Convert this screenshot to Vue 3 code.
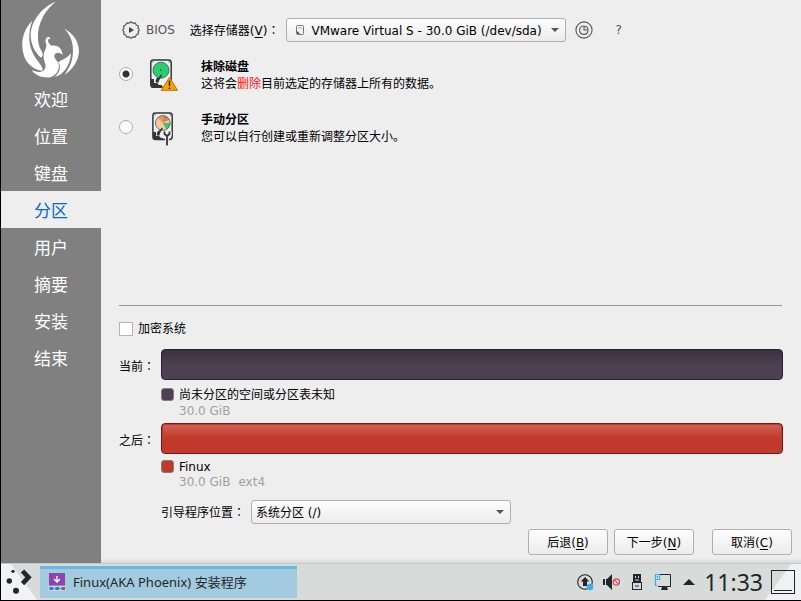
<script setup>
import { ref } from 'vue'

const steps = ['欢迎', '位置', '键盘', '分区', '用户', '摘要', '安装', '结束']
const current = 3
const mode = ref('erase')
const encrypt = ref(false)
const device = ref('sda')
const loader = ref('root')
</script>

<template>
  <div class="desktop">
    <div class="installer">
      <aside class="sidebar">
        <svg class="logo" viewBox="60 0 186 240" aria-hidden="true">
          <g fill="#fff">
            <path d="M97 62C77 80 65 110 67 140C69 174 84 195 106 206C118 211 130 215 128 206C124 190 92 168 88 122C87 98 90 78 97 62Z" />
            <path d="M167 5C130 20 94 58 92 104C92 136 108 160 123 173C129 169 129 163 127 156C105 126 106 54 167 5Z" />
            <path d="M139 133C133 121 138 110 147 111C153 113 150 121 147 117C141 118 145 131 154 137C170 134 186 141 188 166C184 159 175 156 168 160C159 165 164 176 171 183C184 198 174 225 151 232C129 235 105 227 96 211C110 216 126 220 134 208C142 194 129 184 131 166C133 150 140 146 139 133Z" />
            <path d="M213 160C203 174 186 179 175 187C186 203 176 222 164 231C188 227 211 197 213 160Z" />
            <path d="M192 86C215 97 236 119 237 153C236 184 216 210 194 224C212 199 219 179 219 151C219 126 211 102 192 86Z" />
          </g>
        </svg>
        <ol class="steps">
          <li v-for="(s, i) in steps" :key="s" :class="{ active: i === current }">{{ s }}</li>
        </ol>
      </aside>

      <main class="content">
        <div class="device-row">
          <svg class="icon18" viewBox="0 0 18 18" aria-hidden="true">
            <path d="M9 .8L11 2.2L13.3 1.9L14.3 4L16.4 5L16.1 7.2L17.3 9L16.1 10.9L16.4 13L14.3 14L13.3 16.1L11 15.9L9 17.2L7 15.9L4.7 16.1L3.7 14L1.6 13L1.9 10.9L.7 9L1.9 7.2L1.6 5L3.7 4L4.7 1.9L7 2.2Z" fill="none" stroke="#555" stroke-width="1.2" stroke-linejoin="round" />
            <path d="M7 6L12 9L7 12Z" fill="#444" />
          </svg>
          <span class="bios">BIOS</span>
          <label class="device-label" for="device">选择存储器(<u>V</u>)<span class="colon">：</span></label>
          <div class="combo device">
            <select id="device" v-model="device">
              <option value="sda">VMware Virtual S - 30.0 GiB (/dev/sda)</option>
            </select>
            <svg class="drive" viewBox="0 0 8 10" aria-hidden="true">
              <rect x=".5" y=".5" width="7" height="9" rx="1" fill="#f3f3f3" stroke="#777" />
              <path d="M2 3.5A2.3 2.3 0 0 1 6 4" fill="none" stroke="#aaa" />
              <path d="M1 9V6.5H2L4 9Z" fill="#555" />
            </svg>
            <span class="arrow"></span>
          </div>
          <button class="plain revert" type="button" aria-label="partition table">
            <svg class="icon18" viewBox="0 0 18 18" aria-hidden="true">
              <g fill="none" stroke="#555" stroke-width="1.1">
                <circle cx="9" cy="9" r="8.1" />
                <path d="M8.5 5A4.2 4.2 0 1 0 13 9.6" />
                <path d="M9 5.2V9H13C13 6.3 11.6 5.2 9 5.2Z" />
              </g>
            </svg>
          </button>
          <button class="plain help" type="button">?</button>
        </div>

        <div class="choices">
          <label class="choice">
            <input v-model="mode" type="radio" name="mode" value="erase" />
            <svg class="disk" viewBox="0 0 34 34" aria-hidden="true">
              <rect x="3.8" y="1" width="20.4" height="27.2" rx="2.6" fill="#eef1f3" stroke="#31363b" stroke-width="1.5" />
              <path d="M4 20H7V24H10L12 26H15V29H5L4 28Z" fill="#31363b" />
              <circle cx="14" cy="11.2" r="8" fill="#2ecc71" stroke="#3a5548" stroke-width=".8" />
              <circle cx="14" cy="11" r=".8" fill="#31363b" />
              <path d="M14.5 15L12 18L9.3 19.5L8.4 23L11 24L13.5 18.8L15 17Z" fill="#31363b" />
              <path d="M5.7 3h1M21.5 3h1" stroke="#31363b" />
              <path d="M22.5 18.2L30.6 31.3H14.1Z" fill="#f5a30a" stroke="#b97608" stroke-width="1" stroke-linejoin="round" />
              <path d="M22.5 21.5V27M22.5 28.5V30" stroke="#2c1c00" stroke-width="1.5" />
            </svg>
            <span class="choice-text"><b>抹除磁盘</b><span>这将会<em>删除</em>目前选定的存储器上所有的数据。</span></span>
          </label>
          <label class="choice">
            <input v-model="mode" type="radio" name="mode" value="manual" />
            <svg class="disk" viewBox="0 0 34 34" aria-hidden="true">
              <rect x="5.9" y="1" width="19.3" height="26.4" rx="2.6" fill="#eef1f3" stroke="#31363b" stroke-width="1.5" />
              <path d="M6 20H9V24H12L14 26H16V28H7L6 27Z" fill="#31363b" />
              <circle cx="15.8" cy="11" r="7.4" fill="#fac7a0" />
              <path d="M15.8 11V3.6A7.4 7.4 0 0 1 22.4 7.8Z" fill="#d38750" />
              <path d="M15.8 11L10.5 5.8A7.4 7.4 0 0 1 15.8 3.6Z" fill="#e39a67" />
              <path d="M15.8 11H23.2A7.4 7.4 0 0 1 19.5 17.4Z" fill="#2ecc71" />
              <circle cx="15.8" cy="11" r="7.4" fill="none" stroke="#5c5651" stroke-width=".8" />
              <path d="M15 15.5L12.8 18L10.5 19.5L9.6 23L12 24L14.2 18.8L16 17Z" fill="#31363b" />
              <path d="M7.8 3h1M22.6 3h1" stroke="#31363b" />
              <path d="M17.2 19.5V22L20 24.5L22.8 22V19.5M20 24V33" fill="none" stroke="#eee" stroke-width="4" />
              <path d="M17.5 19.5V22L20 24L22.5 22V19.5M20 23.5V33.5" fill="none" stroke="#31363b" stroke-width="1.8" />
            </svg>
            <span class="choice-text"><b>手动分区</b><span>您可以自行创建或重新调整分区大小。</span></span>
          </label>
        </div>

        <section class="summary">
          <label class="encrypt"><input v-model="encrypt" type="checkbox" />加密系统</label>

          <div class="parts">
            <span class="part-label">当前<span class="colon">：</span></span>
            <div class="bar before"></div>
            <div class="legend first">
              <span class="swatch dark"></span>
              <span class="legend-name">尚未分区的空间或分区表未知</span>
              <span class="legend-info">30.0 GiB</span>
            </div>
            <span class="part-label">之后<span class="colon">：</span></span>
            <div class="bar after"></div>
            <div class="legend">
              <span class="swatch red"></span>
              <span class="legend-name">Finux</span>
              <span class="legend-info"><span>30.0 GiB</span><span>ext4</span></span>
            </div>
            <div class="loader-row">
              <label for="loader">引导程序位置<span class="colon">：</span></label>
              <div class="combo loader">
                <select id="loader" v-model="loader">
                  <option value="root">系统分区 (/)</option>
                </select>
                <span class="arrow"></span>
              </div>
            </div>
          </div>
        </section>

        <div class="actions">
          <button class="push" type="button">后退(<u>B</u>)</button>
          <button class="push" type="button">下一步(<u>N</u>)</button>
          <button class="push cancel" type="button">取消(<u>C</u>)</button>
        </div>
      </main>
    </div>

    <footer class="taskbar">
      <button class="launcher" type="button" aria-label="menu">
        <svg viewBox="0 0 39 36" aria-hidden="true">
          <path d="M0 0H10L36 36H0Z" fill="#f2f3f5" />
          <g fill="#232629">
            <circle cx="12" cy="7.3" r="1.6" />
            <circle cx="8.3" cy="17" r="2.7" />
            <circle cx="15" cy="26.8" r="3" />
          </g>
          <path d="M21.5 7L27.5 13.3L21.5 19.6" fill="none" stroke="#232629" stroke-width="4.6" />
        </svg>
      </button>
      <button class="task" type="button">
        <svg class="task-icon" viewBox="0 0 18 18" aria-hidden="true">
          <rect x="1" y="0" width="16" height="12.5" fill="#8e44ad" />
          <path d="M9 3V8.5M6 6L9 9L12 6" fill="none" stroke="#fff" stroke-width="1.3" />
          <rect x="0" y="13" width="18" height="5" fill="#c5d3dc" />
          <path d="M1.5 15.5H16.5" stroke="#7f8c8d" />
          <path d="M1.5 15.5H5M7.5 15.5H11" stroke="#2585d0" stroke-width="3" />
          <path d="M13.5 15.5H17" stroke="#6e6e6e" stroke-width="3" />
        </svg>
        Finux(AKA Phoenix) 安装程序
      </button>
      <div class="tray">
        <svg class="tray-icon" viewBox="0 0 18 18" aria-hidden="true">
          <circle cx="9" cy="9" r="7.3" fill="none" stroke="#232629" stroke-width="1.1" />
          <path d="M9 4L13.3 8.5H11V13H7V8.5H4.7Z" fill="#232629" />
          <circle cx="14" cy="14" r="3.2" fill="#3daee9" />
        </svg>
        <svg class="tray-icon" viewBox="0 0 18 18" aria-hidden="true">
          <path d="M1 6H3V12H1ZM4 6H5L10 1V17L5 12H4Z" fill="#232629" />
          <circle cx="14.4" cy="9" r="3.2" fill="none" stroke="#da4453" stroke-width="1.2" />
          <path d="M12.2 6.8L16.6 11.2" stroke="#da4453" stroke-width="1.2" />
        </svg>
        <svg class="tray-icon" viewBox="0 0 18 18" aria-hidden="true">
          <path d="M5 1H13V9H5Z" fill="#232629" />
          <path d="M7 3H8V5H7ZM10 3H11V5H10Z" fill="#d7dbdb" />
          <path d="M7 7H11" stroke="#d7dbdb" />
          <rect x="4.5" y="9.5" width="9" height="7" fill="#d7dbdb" stroke="#232629" />
          <path d="M7 13H11" stroke="#232629" />
        </svg>
        <svg class="tray-icon" viewBox="0 0 18 18" aria-hidden="true">
          <path d="M6 1.5H16.5V13.5H4" fill="none" stroke="#232629" />
          <path d="M4 13H17V14H13L14 17H7L8 14H4Z" fill="#232629" />
          <path d="M1.5 1.5H5.5V6.5H1.5ZM3.5 3V5M1.5 6.5V12.5H3" fill="none" stroke="#3daee9" stroke-width="1.2" />
        </svg>
        <svg class="tray-icon" viewBox="0 0 18 18" aria-hidden="true"><path d="M3 12L9 6L15 12Z" fill="#232629" /></svg>
      </div>
      <time class="clock">11:33</time>
      <button class="show-desktop" type="button" aria-label="desktop">
        <svg viewBox="0 0 36 36" aria-hidden="true">
          <path d="M0 36L26 0H36V36Z" fill="#f0f1f4" />
          <rect x="6.5" y="6.5" width="23" height="23" fill="none" stroke="#232629" />
          <path d="M9 26.5H27" stroke="#232629" />
        </svg>
      </button>
    </footer>
  </div>
</template>

<style>
body {
  margin: 0;
}
</style>

<style scoped>
.desktop {
  box-sizing: border-box;
  display: flex;
  flex-direction: column;
  min-height: 100vh;
  border-left: 1px solid #000;
  border-bottom: 1px solid #000;
  background: #eeeeee;
  color: #000;
  font: 12px/16px "DejaVu Sans", "Noto Sans CJK SC", sans-serif;
}
button,
select {
  font: inherit;
  color: inherit;
  margin: 0;
}
u {
  text-underline-offset: 2px;
  text-decoration-thickness: 1px;
}
.colon {
  font-family: "Noto Sans CJK TC", sans-serif;
}
.installer {
  flex: 1;
  display: flex;
}
.sidebar {
  width: 100px;
  background: #808080;
}
.logo {
  display: block;
  width: 62px;
  height: 80px;
  margin: 0 0 0 19px;
}
.steps {
  list-style: none;
  margin: 0;
  padding: 0;
  color: #fff;
  font-size: 17px;
  line-height: 33px;
  text-align: center;
}
.steps li {
  padding-top: 4px;
}
.steps .active {
  background: #eeeeee;
  color: #0c68d0;
}
.content {
  flex: 1;
  min-width: 0;
  display: flex;
  flex-direction: column;
  padding: 18px 9px 8px 18px;
  background: linear-gradient(to top, #d9d9d9, #eeeeee 5px);
}
.device-row {
  display: flex;
  align-items: center;
  height: 24px;
  padding-left: 3px;
}
.icon18 {
  display: block;
  width: 18px;
  height: 18px;
}
.bios {
  margin-left: 6px;
  color: #555;
}
.device-label {
  margin-left: 15px;
}
.combo {
  position: relative;
}
.combo select {
  display: block;
  box-sizing: border-box;
  width: 100%;
  height: 24px;
  padding: 2px 20px 0 4px;
  border: 1px solid #b0b0b0;
  border-radius: 3px;
  background: linear-gradient(#fdfdfd, #ececec);
  appearance: none;
}
.device {
  width: 280px;
  margin-left: 7px;
}
.combo.device select {
  padding-left: 24px;
}
.drive {
  position: absolute;
  left: 10px;
  top: 7px;
  width: 8px;
  height: 10px;
}
.arrow {
  position: absolute;
  right: 7px;
  top: 10px;
  border: 4px solid transparent;
  border-top-color: #555;
  border-bottom: 0;
}
.plain {
  padding: 0;
  border: 0;
  background: none;
}
.revert {
  margin-left: 9px;
}
.help {
  margin-left: 22px;
  color: #555;
}
.choices {
  display: grid;
  gap: 19px;
  padding-top: 15px;
}
.choice {
  display: flex;
  align-items: center;
  height: 34px;
}
.choice input {
  appearance: none;
  box-sizing: border-box;
  width: 14px;
  height: 14px;
  margin: 0;
  border: 1px solid #aaa;
  border-radius: 50%;
  background: #fff;
}
.choice input:checked {
  background: radial-gradient(circle, #333 3px, #fff 4px);
}
.disk {
  width: 34px;
  height: 34px;
  margin: 4px 0 0 14px;
}
.choice-text {
  display: grid;
  margin: 4px 0 0 20px;
  line-height: 17px;
}
.choice-text em {
  color: #ff1010;
  font-style: normal;
}
.summary {
  margin-top: auto;
  padding-top: 15px;
}
.summary::before {
  content: "";
  display: block;
  height: 1px;
  margin: 0 10px 15px 0;
  background: #999;
}
.encrypt {
  display: flex;
  align-items: center;
  gap: 5px;
}
.encrypt input {
  appearance: none;
  box-sizing: border-box;
  width: 14px;
  height: 14px;
  margin: 0;
  border: 1px solid #b4b4b4;
  background: #fff;
}
.encrypt input:checked {
  background: #3daee9;
}
.parts {
  display: grid;
  grid-template-columns: 42px 1fr;
  align-items: center;
  margin: 12px 9px 0 0;
}
.part-label {
  padding-top: 4px;
}
.bar {
  box-sizing: border-box;
  height: 31px;
  border-radius: 4px;
}
.before {
  border: 1px solid #2a2230;
  background: linear-gradient(#3a303e, #4d4051 50%);
}
.after {
  border: 1px solid #6d1c17;
  background: linear-gradient(#d26258, #c0392b 50%);
  box-shadow: inset 0 0 0 1px #c0392b;
}
.legend {
  grid-column: 2;
  display: grid;
  grid-template-columns: 12px 1fr;
  column-gap: 6px;
  align-items: center;
  padding: 6px 0 10px;
  line-height: 15px;
}
.legend.first {
  padding: 7px 0 4px;
  line-height: 16px;
}
.legend-info {
  grid-column: 2;
  display: flex;
  gap: 8px;
  color: #a0a0a0;
}
.swatch {
  box-sizing: border-box;
  width: 13px;
  height: 13px;
  margin-bottom: 2px;
  border: 1px solid #808080;
  border-radius: 3px;
}
.dark {
  background: #4d4051;
}
.red {
  background: #c0392b;
}
.loader-row {
  grid-column: 2;
  display: flex;
  align-items: center;
  gap: 6px;
}
.loader {
  width: 260px;
}
.actions {
  display: flex;
  justify-content: flex-end;
  gap: 6px;
  margin-top: 5px;
}
.push {
  width: 80px;
  height: 26px;
  padding: 1px 0 0;
  border: 1px solid #b0b0b0;
  border-radius: 3px;
  background: linear-gradient(#fdfdfd, #ececec);
}
.cancel {
  margin-left: 12px;
}
.taskbar {
  display: flex;
  align-items: stretch;
  height: 36px;
  background: #d7dbda;
  border-top: 1px solid #c4c8c8;
  color: #232629;
  font-family: "Noto Sans", "Noto Sans CJK SC", sans-serif;
}
.launcher,
.show-desktop {
  padding: 0;
  border: 0;
  background: none;
}
.launcher svg {
  display: block;
  width: 39px;
  height: 36px;
}
.task {
  box-sizing: border-box;
  display: flex;
  align-items: center;
  gap: 7px;
  width: 257px;
  margin: 2px 0;
  padding: 0 8px 3px;
  border: 0;
  border-top: 3px solid #68b8e2;
  background: #a3cbdf;
  font-size: 13px;
}
.task-icon {
  width: 18px;
  height: 18px;
}
.tray {
  display: flex;
  align-items: center;
  gap: 8px;
  margin-left: auto;
}
.tray-icon {
  width: 18px;
  height: 18px;
}
.clock {
  align-self: center;
  margin: 0 2px 0 6px;
  font-size: 23px;
  line-height: 36px;
}
.show-desktop svg {
  display: block;
  width: 36px;
  height: 36px;
}
</style>
